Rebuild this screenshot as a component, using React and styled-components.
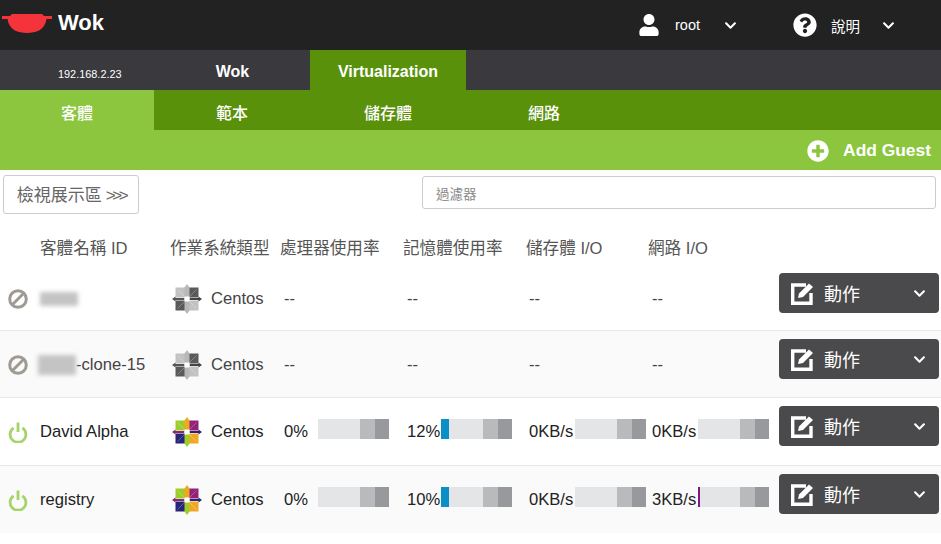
import React from 'react'
import styled, { createGlobalStyle } from 'styled-components'
import { FaUser, FaQuestionCircle, FaChevronDown, FaPlusCircle } from 'react-icons/fa'

const GlobalStyle = createGlobalStyle`
  html, body {
    margin: 0;
    padding: 0;
    background: #fff;
    overflow: hidden;
    font-family: 'Liberation Sans', 'Noto Sans CJK TC', sans-serif;
  }
  * {
    box-sizing: border-box;
  }
`

const PowerIcon = () => (
  <svg width="20" height="21" viewBox="0 0 20 21">
    <path d="M5.6 5.8 A7.9 7.9 0 1 0 14.4 5.8" fill="none" stroke="#a5d468" strokeWidth="2.8" />
    <path d="M10 0.5 V10" fill="none" stroke="#a5d468" strokeWidth="2.8" />
  </svg>
)

const BanIcon = () => (
  <svg width="20" height="20" viewBox="0 0 20 20">
    <circle cx="10" cy="10" r="8.3" fill="none" stroke="#a09a94" strokeWidth="3" />
    <path d="M4.5 15.5 L15.5 4.5" fill="none" stroke="#a09a94" strokeWidth="3" />
  </svg>
)

const EditIcon = () => (
  <svg width="23" height="23" viewBox="0 0 23 23">
    <path d="M15 3 H1.7 V21.3 H20 V11" fill="none" stroke="#fff" strokeWidth="3.4" />
    <path d="M7 16 L8 11.5 L18 1.5 L22 5 L12 15 Z" fill="#fff" />
  </svg>
)

const palettes = {
  color: ['#9ccd2a', '#932279', '#efa724', '#262577', '#efa724', '#9ccd2a', '#932279', '#262577'],
  gray: ['#c2c2c2', '#5a5a5a', '#c2c2c2', '#5a5a5a', '#b8b8b8', '#b8b8b8', '#555', '#444'],
}

const CentosIcon = ({ gray }) => {
  const [lime, purple, orange, navy, top, bottom, left, right] = palettes[gray ? 'gray' : 'color']
  return (
    <svg width="30" height="30" viewBox="0 0 30 30">
      <rect x="3.5" y="3.5" width="10" height="10" fill={lime} />
      <rect x="16.5" y="3.5" width="10" height="10" fill={purple} />
      <rect x="3.5" y="16.5" width="10" height="10" fill={navy} />
      <rect x="16.5" y="16.5" width="10" height="10" fill={orange} />
      <path d="M5.5 5.5 L12 12 M24.5 5.5 L18 12 M5.5 24.5 L12 18 M24.5 24.5 L18 18" stroke="#fff" strokeWidth="0.6" opacity="0.45" />
      <path d="M15 0 L17.5 3.5 V13 H12.5 V3.5 Z" fill={top} />
      <path d="M15 30 L17.5 26.5 V17 H12.5 V26.5 Z" fill={bottom} />
      <path d="M0 15 L3.5 12.5 V14 H12.5 V16 H3.5 V17.5 Z" fill={left} />
      <path d="M30 15 L26.5 12.5 V14 H17.5 V16 H26.5 V17.5 Z" fill={right} />
      <rect x="12.5" y="12.5" width="5" height="5" fill="#fff" />
    </svg>
  )
}

const TopBar = styled.header`
  height: 50px;
  background: #222;
  display: flex;
  align-items: center;
  color: #fff;
`

const Brand = styled.div`
  display: flex;
  align-items: center;
  gap: 6px;
  width: 634px;
  padding: 0 0 4px 2px;
  font-size: 22px;
  font-weight: 700;
`

const UserMenu = styled.div`
  display: flex;
  align-items: center;
  width: ${p => p.$width}px;
  font-size: 14.5px;
`

const MenuIcon = styled.span`
  display: flex;
  justify-content: center;
  width: ${p => p.$width}px;
  margin-right: ${p => p.$gap}px;
  font-size: ${p => p.$size}px;
`

const MenuLabel = styled.span`
  width: ${p => p.$width}px;
`

const Chevron = styled(FaChevronDown)`
  font-size: 13px;
  color: #fff;
`

const TabBar = styled.nav`
  height: 40px;
  background: #3a393e;
  display: flex;
  color: #fff;
`

const HostCell = styled.div`
  width: 155px;
  padding: 18px 0 0 58px;
  font-size: 10.9px;
`

const MainTab = styled.div`
  width: ${p => p.$active ? 156 : 155}px;
  display: flex;
  align-items: center;
  justify-content: center;
  padding-top: 3px;
  font-size: 16px;
  font-weight: 700;
  background: ${p => p.$active ? '#5a910b' : 'transparent'};
`

const SubBar = styled.nav`
  height: 40px;
  background: #5a910b;
  display: flex;
  color: #fff;
`

const SubTab = styled.div`
  width: ${p => p.$first ? 154 : 156}px;
  display: flex;
  align-items: center;
  justify-content: center;
  padding-top: 3px;
  font-size: 16px;
  font-weight: 500;
  background: ${p => p.$active ? '#8cc63f' : 'transparent'};
`

const ActionBar = styled.div`
  height: 40px;
  background: #8cc63f;
  display: flex;
  align-items: center;
  justify-content: flex-end;
  gap: 14px;
  padding: 1px 10px 0 0;
  color: #fff;
  font-size: 17.4px;
  font-weight: 700;
`

const PlusIcon = styled(FaPlusCircle)`
  font-size: 22px;
`

const FilterRow = styled.div`
  display: flex;
  justify-content: space-between;
  align-items: flex-start;
  padding: 5px 5px 0 3px;
  height: 71px;
`

const GalleryButton = styled.button`
  width: 136px;
  height: 39px;
  padding: 0 0 2px;
  background: #fff;
  border: 1px solid #ccc;
  border-radius: 3px;
  color: #666;
  font-family: inherit;
  font-size: 17px;
`

const Arrows = styled.span`
  margin-left: 4px;
  letter-spacing: -3.4px;
`

const FilterInput = styled.div`
  width: 514px;
  height: 33px;
  margin-top: 1px;
  padding: 0 13px;
  display: flex;
  align-items: center;
  border: 1px solid #ccc;
  border-radius: 3px;
  color: #888;
  font-size: 13.5px;
`

const HeaderRow = styled.div`
  display: grid;
  grid-template-columns: 40px 130px 110px 123px 123px 122px auto;
  height: 30px;
  margin-top: -7px;
  padding-bottom: 4px;
  align-items: center;
  color: #555;
  font-size: 16.6px;
  white-space: nowrap;
`

const VmRow = styled.div`
  height: ${p => p.$height}px;
  padding-top: ${p => p.$top}px;
  display: grid;
  grid-template-columns: 40px 132px 112px 123px 122px 123px 127px 160px;
  background: ${p => p.$alt ? '#fafafa' : '#fff'};
  border-bottom: ${p => p.$last ? 'none' : '1px solid #e8e8e8'};
  color: ${p => p.$muted ? '#444' : '#222'};
  font-size: 16.6px;
`

const Cell = styled.div`
  height: 40px;
  padding-top: 12px;
  display: flex;
  align-items: center;
  white-space: nowrap;
`

const StateCell = styled(Cell)`
  padding-left: 8px;
`

const NameCell = styled(Cell)`
  margin-left: ${p => p.$shift || 0}px;
`

const BlurName = styled.span`
  display: inline-block;
  width: 38px;
  height: ${p => p.$tall ? 20 : 14}px;
  background: #c4c4c4;
  filter: blur(2px);
`

const OsCell = styled(Cell)`
  gap: 9px;
`

const MetricLabel = styled.span`
  min-width: ${p => p.$width}px;
`

const Meter = styled.div`
  width: 71px;
  height: 20px;
  flex: none;
  margin-top: -6px;
  background: linear-gradient(to right, #e4e5e7 0 42px, #b9babc 42px 57px, #98999c 57px);
`

const MeterFill = styled.div`
  height: 100%;
  background: ${p => p.$color};
`

const ActionButton = styled.div`
  width: 160px;
  height: 40px;
  display: flex;
  align-items: center;
  padding: 0 13px 0 12px;
  background: #4a494b;
  border-radius: 4px;
  color: #fff;
  font-size: 18px;
`

const ActionLabel = styled.span`
  flex: 1;
  margin-left: 10px;
`

const metricWidths = [34, 34, 46, 46]
const metricBars = ['#0a8fc7', '#0a8fc7', '#7f1a80', '#7f1a80']

const Metric = ({ index, value }) => {
  if (!value) return <Cell><span>--</span></Cell>
  return (
    <Cell>
      <MetricLabel $width={metricWidths[index]}>{value[0]}</MetricLabel>
      <Meter>
        <MeterFill $color={metricBars[index]} style={{ width: value[1] }} />
      </Meter>
    </Cell>
  )
}

const guests = [
  { height: 67, top: 9, muted: true, metrics: [null, null, null, null] },
  { height: 67, top: 8, alt: true, muted: true, clone: true, metrics: [null, null, null, null] },
  { height: 68, top: 8, name: 'David Alpha', metrics: [['0%', 0], ['12%', 8], ['0KB/s', 0], ['0KB/s', 0]] },
  { height: 67, top: 8, alt: true, last: true, name: 'registry', metrics: [['0%', 0], ['10%', 8], ['0KB/s', 0], ['3KB/s', 2]] },
]

const columns = ['', '客體名稱 ID', '作業系統類型', '處理器使用率', '記憶體使用率', '儲存體 I/O', '網路 I/O']

export default function App() {
  return (
    <>
      <GlobalStyle />
      <TopBar>
        <Brand>
          <svg width="50" height="34" viewBox="0 0 50 34">
            <path d="M0 10 H8 L10 8 H40 L42 10 H50 V13 H44.5 C43 24 34 27 25 27 C16 27 7 24 5.5 13 H0 Z" fill="#f4343a" />
          </svg>
          Wok
        </Brand>
        <UserMenu $width={158}>
          <MenuIcon $width={30} $gap={11} $size={22}><FaUser /></MenuIcon>
          <MenuLabel $width={49}>root</MenuLabel>
          <Chevron />
        </UserMenu>
        <UserMenu $width={149}>
          <MenuIcon $width={26} $gap={13} $size={24}><FaQuestionCircle /></MenuIcon>
          <MenuLabel $width={51}>說明</MenuLabel>
          <Chevron />
        </UserMenu>
      </TopBar>
      <TabBar>
        <HostCell>192.168.2.23</HostCell>
        <MainTab>Wok</MainTab>
        <MainTab $active>Virtualization</MainTab>
      </TabBar>
      <SubBar>
        <SubTab $first $active>客體</SubTab>
        <SubTab>範本</SubTab>
        <SubTab>儲存體</SubTab>
        <SubTab>網路</SubTab>
      </SubBar>
      <ActionBar>
        <PlusIcon />
        Add Guest
      </ActionBar>
      <FilterRow>
        <GalleryButton>檢視展示區<Arrows>&gt;&gt;&gt;</Arrows></GalleryButton>
        <FilterInput>過濾器</FilterInput>
      </FilterRow>
      <HeaderRow>
        {columns.map(c => <span key={c}>{c}</span>)}
      </HeaderRow>
      {guests.map((g, i) => (
        <VmRow key={i} $height={g.height} $top={g.top} $alt={g.alt} $last={g.last} $muted={g.muted}>
          <StateCell>{g.name ? <PowerIcon /> : <BanIcon />}</StateCell>
          <NameCell $shift={g.clone ? -2 : 0}>
            {g.name || <BlurName $tall={g.clone} />}
            {g.clone && '-clone-15'}
          </NameCell>
          <OsCell>
            <CentosIcon gray={!g.name} />
            Centos
          </OsCell>
          {g.metrics.map((m, n) => <Metric key={n} index={n} value={m} />)}
          <ActionButton>
            <EditIcon />
            <ActionLabel>動作</ActionLabel>
            <Chevron />
          </ActionButton>
        </VmRow>
      ))}
    </>
  )
}
